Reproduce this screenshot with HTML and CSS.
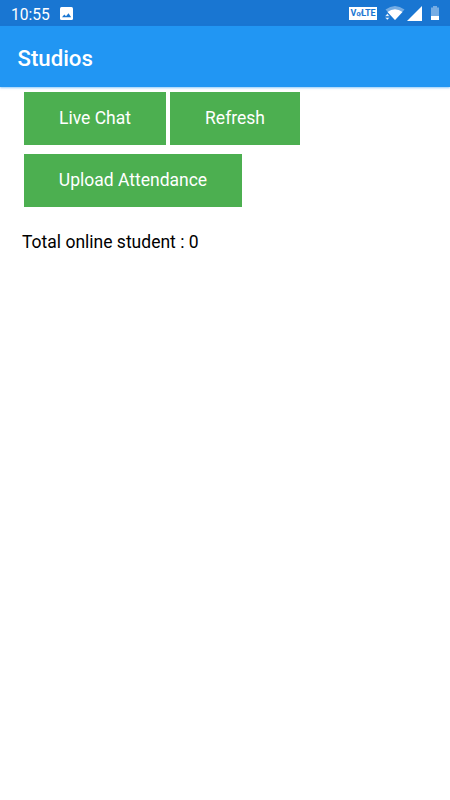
FILE: index.html
```html
<!DOCTYPE html>
<html lang="en">
   <head>
      <meta charset="utf-8">
      <title>Studios</title>
      <link rel="stylesheet" href="styles.css">
   </head>
   <body>
      <div class="status-bar">
         <span class="clock">10:55</span>
         <svg class="picture-icon" width="13" height="13" viewBox="0 0 13 13">
            <rect width="13" height="13" rx="1.5" fill="#fff"/>
            <path d="M2 10.3L4.300 7.500L6 9.300L8.500 6.300L11.200 10.3Z" fill="#1976d2"/>
         </svg>
         <div class="status-icons">
            <span class="volte">V<i>o</i><i>/</i>LTE</span>
            <svg class="wifi" width="20" height="14" viewBox="0 0 20 14">
               <path d="M0.500 3.500Q10 -3.500 19.500 3.500L10 14Z" fill="#fff" fill-opacity=".4"/>
               <path d="M2.500 6Q10 0.500 17.500 6L10 14Z" fill="#fff"/>
               <path d="M0 10.300L2.300 7.500L4.800 10.300ZM0 11.600H4.800L2.300 14Z" fill="#fff" stroke="#1976d2" stroke-width=".5"/>
            </svg>
            <svg class="signal" width="15" height="15" viewBox="0 0 15 15">
               <path d="M0 15L15 0V15Z" fill="#fff"/>
            </svg>
            <svg class="battery" width="8" height="14" viewBox="0 0 8 14">
               <path d="M2 0H6V1.500H8V14H0V1.500H2Z" fill="#fff" fill-opacity=".4"/>
               <path d="M0 10H8V14H0Z" fill="#fff"/>
            </svg>
         </div>
      </div>
      <div class="header">
         <h1>Studios</h1>
      </div>
      <div class="content">
         <div class="actions">
            <button class="btn live-chat">Live Chat</button>
            <button class="btn refresh">Refresh</button>
            <button class="btn upload">Upload Attendance</button>
         </div>
         <p class="total">Total online student : 0</p>
      </div>
   </body>
</html>
```

FILE: styles.css
```css
* {
margin: 0;
padding: 0;
box-sizing: border-box;
}
body {
font-family: Roboto, sans-serif;
background: #fff;
color: #000;
}
.status-bar {
display: flex;
align-items: center;
height: 26px;
padding: 1px 11px 0;
background: #1976d2;
color: #fff;
}
.clock {
font-size: 15.6px;
width: 49px;
padding-top: 2px;
}
.status-icons {
display: flex;
align-items: center;
margin-left: auto;
}
.volte {
width: 28px;
height: 13px;
background: #fff;
color: #1976d2;
font-size: 9px;
font-weight: 700;
line-height: 13px;
letter-spacing: -0.1px;
text-align: center;
margin-right: 8px;
}
.volte i {
font-size: 7px;
letter-spacing: -0.8px;
}
.wifi,
.battery {
margin-top: -1px;
}
.signal {
margin: -1px 9px 0 2px;
}
.header {
display: flex;
align-items: center;
height: 61px;
padding: 3px 17.5px 0;
background: #2196f3;
color: #fff;
box-shadow: 0 1px 2px rgba(33, 150, 243, 0.5);
}
.header h1 {
font-size: 22.2px;
font-weight: 500;
}
.content {
padding: 5px 24px;
}
.actions {
display: flex;
flex-wrap: wrap;
gap: 9px 4px;
}
.btn {
height: 53px;
padding-bottom: 1px;
border: none;
background: #4caf50;
color: #fff;
font-family: inherit;
font-size: 17.5px;
}
.live-chat {
width: 142px;
}
.refresh {
width: 130px;
}
.upload {
width: 218px;
}
.total {
margin: 25px 0 0 -2px;
font-size: 17.5px;
}
```
